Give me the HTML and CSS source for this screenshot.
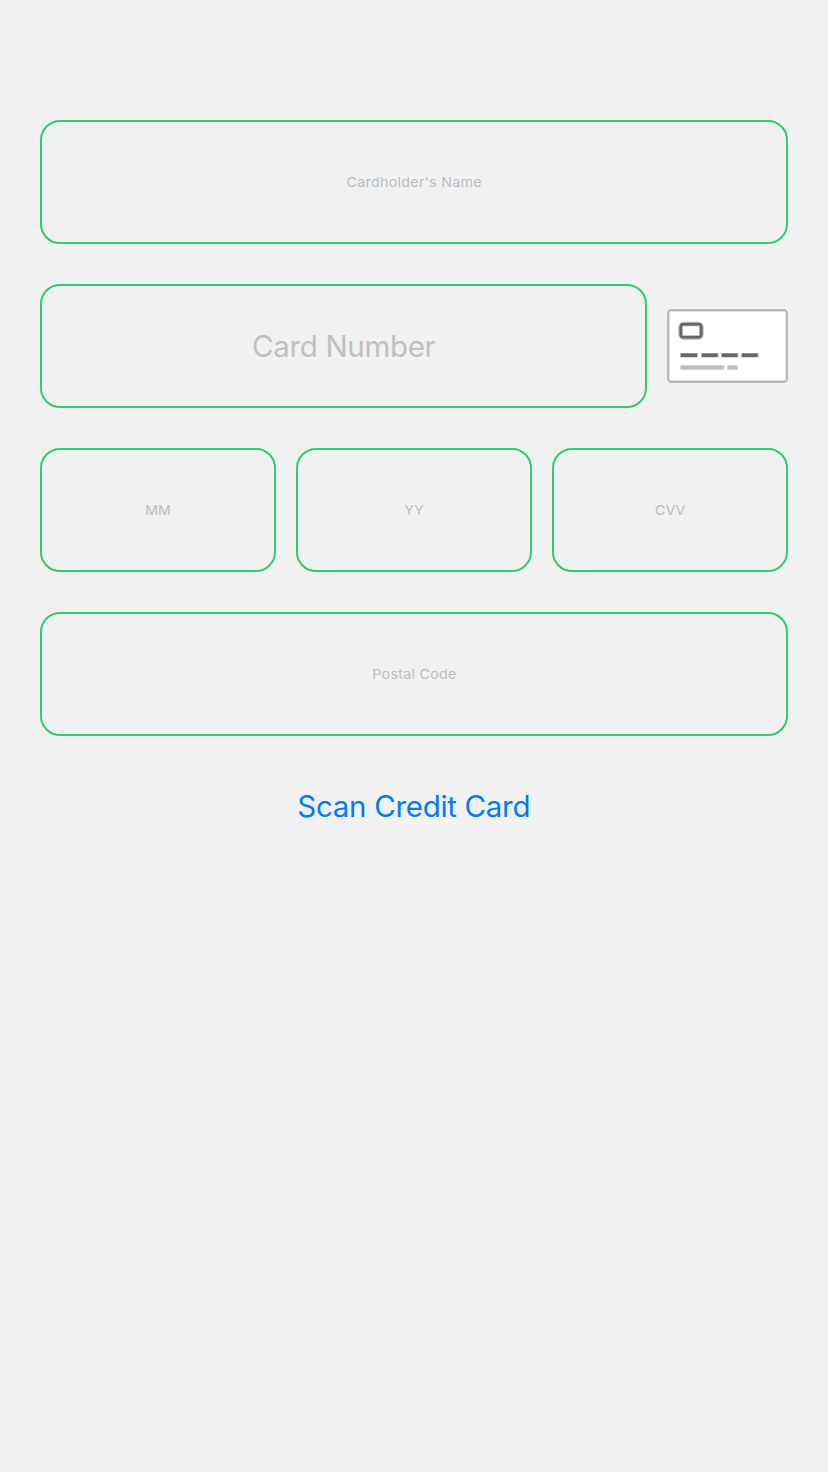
FILE: index.html
```html
<!DOCTYPE html>
<html lang="en">
<head>
<meta charset="utf-8">
<title>Credit Card</title>
<link rel="stylesheet" href="styles.css">
</head>
<body>
<main class="form">
  <div class="field"><span class="small name">Cardholder's Name</span></div>
  <div class="row">
    <div class="field grow"><span class="large number">Card Number</span></div>
    <svg class="card" width="121" height="74" viewBox="0 0 121 74">
      <rect x="1" y="1" width="119" height="72" rx="3.5" fill="#fff" stroke="#b8b8b8" stroke-width="2"/>
      <rect x="2.5" y="2.5" width="116" height="69" rx="2.5" fill="none" stroke="#dedede"/>
      <rect x="13.6" y="15" width="20.8" height="13.5" rx="3.5" fill="#fff" stroke="#b5b5b5" stroke-width="4.6"/>
      <rect x="13.8" y="15.2" width="20.4" height="13" rx="2.5" fill="none" stroke="#666" stroke-width="2.6"/>
      <path d="M13 46.2h18M34 46.2h17.5M54 46.2h17.5M74 46.2h17.5" stroke="#bbb" stroke-width="4.4"/>
      <path d="M14 46.2h16M35 46.2h15.5M55 46.2h15.5M75 46.2h15.5" stroke="#666" stroke-width="3.4"/>
      <path d="M13 58.5h44.5M60 58.5h11" stroke="#dadada" stroke-width="5"/>
      <path d="M14 58.5h42.5M61 58.5h9" stroke="#bcbcbc" stroke-width="3.6"/>
    </svg>
  </div>
  <div class="row">
    <div class="field grow"><span class="small short">MM</span></div>
    <div class="field grow"><span class="small short">YY</span></div>
    <div class="field grow"><span class="small short">CVV</span></div>
  </div>
  <div class="field"><span class="small">Postal Code</span></div>
  <div class="scan"><span class="large link">Scan Credit Card</span></div>
</main>
</body>
</html>
```
FILE: styles.css
```css
* { box-sizing: border-box; }
body { margin: 0; background: #f1f1f1; font-family: Inter, "Liberation Sans", sans-serif; }
.form { display: flex; flex-direction: column; gap: 40px; padding: 120px 40px 0; height: 1472px; }
.row { display: flex; align-items: center; gap: 20px; }
.field { height: 124px; border: 2px solid #2ecc71; border-radius: 20px; display: flex; align-items: center; justify-content: center; color: #bcbcc0; }
.grow { flex: 1; }
.card { flex: none; display: block; }
.small { font-size: 13.3px; line-height: 20px; letter-spacing: 0.28px; margin-right: -0.28px; transform: scaleX(1.07); }
.short { letter-spacing: 0; margin-right: 0; }
.large { font-size: 29.5px; line-height: 40px; letter-spacing: -0.33px; margin-right: -0.33px; }
.number { color: #bfbfc4; }
.link { letter-spacing: -0.3px; margin-right: 0.5px; }
.scan { display: flex; justify-content: center; margin-top: 10px; color: #007aff; }
```
